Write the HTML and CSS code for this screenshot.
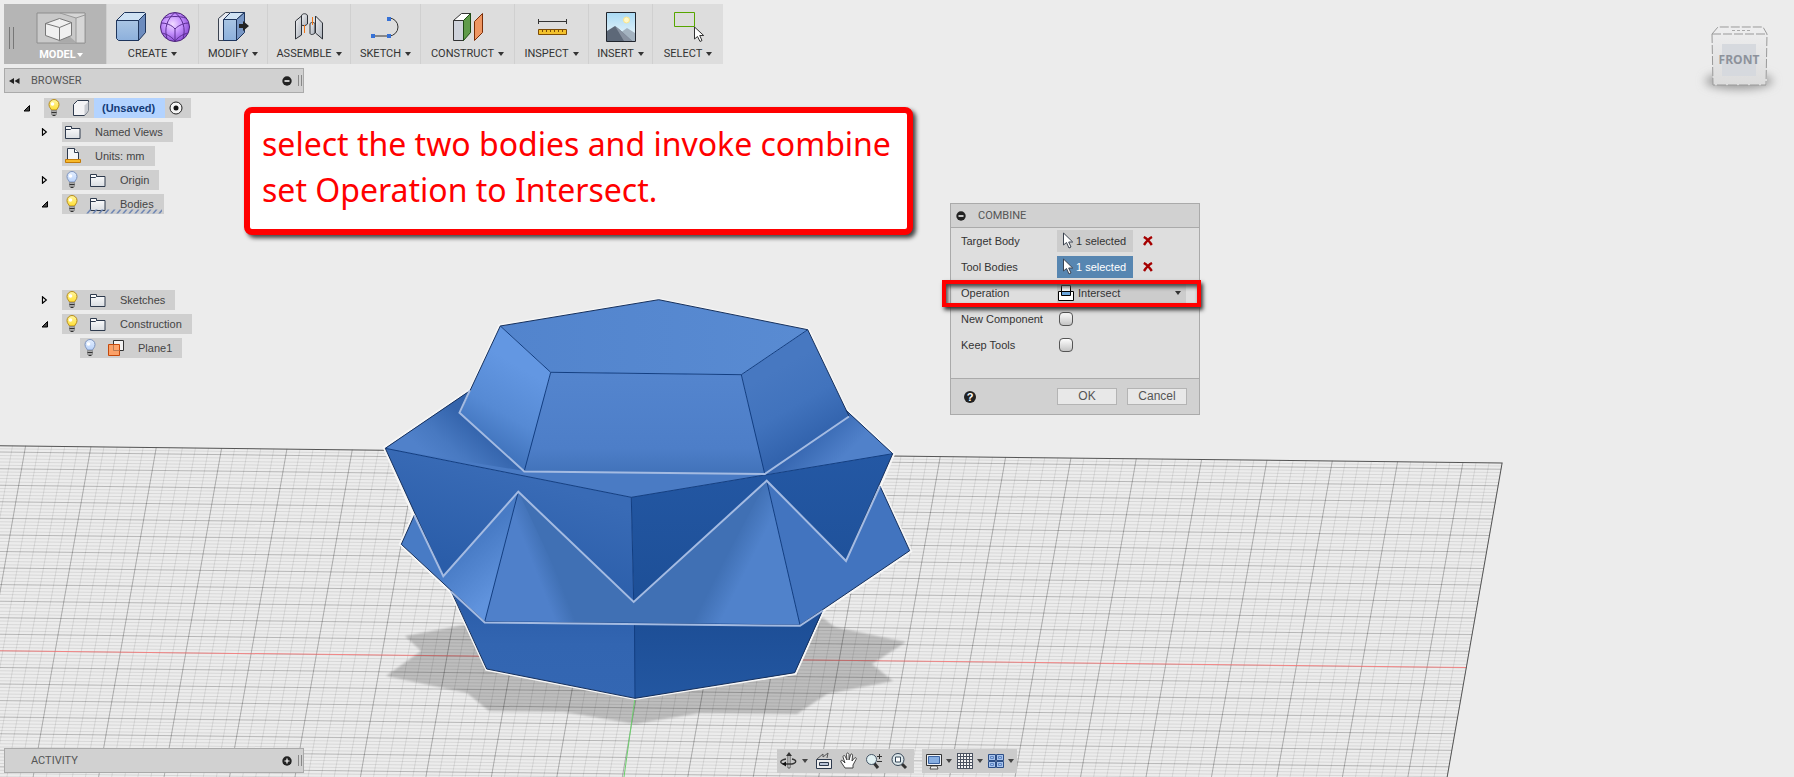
FILE: index.html
```html
<!DOCTYPE html>
<html lang="en">
<head>
<meta charset="utf-8">
<title>Combine</title>
<link rel="stylesheet" href="styles.css">
</head>
<body>
<svg class="defs" width="0" height="0" aria-hidden="true">
  <defs>
    <linearGradient id="gBulb" x1="0" y1="0" x2="0" y2="1"><stop offset="0" stop-color="#fff6a0"/><stop offset="1" stop-color="#ffdf35"/></linearGradient>
    <linearGradient id="gBulbOff" x1="0" y1="0" x2="0" y2="1"><stop offset="0" stop-color="#e4efff"/><stop offset="1" stop-color="#b9d2fa"/></linearGradient>
    <linearGradient id="gBox" x1="0" y1="0" x2="0" y2="1"><stop offset="0" stop-color="#a9c5e4"/><stop offset="1" stop-color="#8db0dc"/></linearGradient>
    <linearGradient id="gFolder" x1="0" y1="0" x2="0" y2="1"><stop offset="0" stop-color="#ffffff"/><stop offset="1" stop-color="#d9dde2"/></linearGradient>
    <linearGradient id="gMetal" x1="0" y1="0" x2="1" y2="1"><stop offset="0" stop-color="#f2f3f5"/><stop offset="1" stop-color="#a9afb8"/></linearGradient>
    <radialGradient id="gBall" cx=".42" cy=".4" r=".6"><stop offset="0" stop-color="#f1dcff"/><stop offset=".5" stop-color="#c794ff"/><stop offset="1" stop-color="#9052d8"/></radialGradient>
    <linearGradient id="gSky" x1="0" y1="0" x2="0" y2="1"><stop offset="0" stop-color="#a9daf4"/><stop offset="1" stop-color="#f2f8fa"/></linearGradient>
    <symbol id="bulb" viewBox="0 0 14 18"><path d="M4.500 11C4 9.500 2 8.500 2 5.500a5 5 0 0 1 10 0c0 3-2 4-2.500 5.500z" fill="url(#gBulb)" stroke="#b58b1c"/><circle cx="5.500" cy="5" r="1.800" fill="#fff"/><path d="M4.500 11.500h5v4h-5z" fill="#aaa" stroke="#777" stroke-width=".6"/><path d="M4.500 13.500h5M5.500 16.500h3" stroke="#333"/></symbol>
    <symbol id="bulb-off" viewBox="0 0 14 18"><path d="M4.500 11C4 9.500 2 8.500 2 5.500a5 5 0 0 1 10 0c0 3-2 4-2.500 5.500z" fill="url(#gBulbOff)" stroke="#7c93bd"/><circle cx="5.500" cy="5" r="1.800" fill="#fff"/><path d="M4.500 11.500h5v4h-5z" fill="#aaa" stroke="#777" stroke-width=".6"/><path d="M4.500 13.500h5M5.500 16.500h3" stroke="#333"/></symbol>
    <symbol id="folder" viewBox="0 0 16 16"><path d="M.5 14.500v-12h6v2h8.500v10z" fill="url(#gFolder)" stroke="#2e3a4d"/><path d="M.5 5.500h5l1-1" fill="none" stroke="#2e3a4d"/></symbol>
    <symbol id="closed" viewBox="0 0 8 8"><path d="M2.500 .8v6.400L6.300 4z" fill="#fff" stroke="#000" stroke-width="1.200"/></symbol>
    <symbol id="open" viewBox="0 0 8 8"><path d="M7.500 1.500v5.500H2z" fill="#444" stroke="#000"/></symbol>
    <symbol id="caret" viewBox="0 0 6 4"><path d="M0 0h6L3 4z" fill="currentColor"/></symbol>
    <symbol id="arrow" viewBox="0 0 12 18"><path d="M1.500 1v12l3-2.500 2.500 5.500 2-1-2.300-5h4z" fill="#fff" stroke="#3b4350"/></symbol>
    <symbol id="minus" viewBox="0 0 10 10"><circle cx="5" cy="5" r="4.700" fill="#222"/><path d="M2.500 5h5" stroke="#fff" stroke-width="1.500"/></symbol>
    <symbol id="plus" viewBox="0 0 10 10"><circle cx="5" cy="5" r="4.700" fill="#222"/><path d="M2.500 5h5M5 2.500v5" stroke="#fff" stroke-width="1.200"/></symbol>
    <symbol id="cross" viewBox="0 0 10 10"><path d="M.8 1c3 1.500 6 5 8 8M9 1C6 2.500 3 6 1 9" fill="none" stroke="#a50000" stroke-width="2.400"/></symbol>
  </defs>
</svg>

<main class="app">
  <svg class="scene" viewBox="0 0 1794 777" preserveAspectRatio="xMinYMin slice" role="img" aria-label="Model view with two intersecting bodies">
    <defs>
      <linearGradient id="fTop" x1="0" y1="0" x2="1" y2="0"><stop offset="0" stop-color="#5284cd"/><stop offset="1" stop-color="#598bd2"/></linearGradient>
      <linearGradient id="fLeft" gradientUnits="userSpaceOnUse" x1="525" y1="370" x2="480" y2="445"><stop offset="0" stop-color="#6397e2"/><stop offset=".55" stop-color="#568ad4"/><stop offset="1" stop-color="#3e71ba"/></linearGradient>
      <linearGradient id="fFront" x1="0" y1="0" x2="0" y2="1"><stop offset="0" stop-color="#5485ce"/><stop offset=".75" stop-color="#4d7ec8"/><stop offset="1" stop-color="#4172b9"/></linearGradient>
      <linearGradient id="fRight" gradientUnits="userSpaceOnUse" x1="775" y1="370" x2="815" y2="440"><stop offset="0" stop-color="#4778c1"/><stop offset=".5" stop-color="#4173bd"/><stop offset="1" stop-color="#3263ad"/></linearGradient>
      <linearGradient id="fFlangeL" gradientUnits="userSpaceOnUse" x1="445" y1="470" x2="480" y2="430"><stop offset="0" stop-color="#5081ca"/><stop offset=".4" stop-color="#4879c1"/><stop offset="1" stop-color="#3464ac"/></linearGradient>
      <linearGradient id="fFlangeR" gradientUnits="userSpaceOnUse" x1="835" y1="465" x2="805" y2="435"><stop offset="0" stop-color="#5081ca"/><stop offset="1" stop-color="#3464ae"/></linearGradient>
      <linearGradient id="fDarkL" gradientUnits="userSpaceOnUse" x1="500" y1="470" x2="470" y2="570"><stop offset="0" stop-color="#396bb6"/><stop offset="1" stop-color="#2a5da9"/></linearGradient>
      <linearGradient id="fDarkR" x1="0" y1="0" x2="0" y2="1"><stop offset="0" stop-color="#2458a4"/><stop offset="1" stop-color="#1d4f97"/></linearGradient>
      <linearGradient id="fLowL" gradientUnits="userSpaceOnUse" x1="500" y1="590" x2="465" y2="550"><stop offset="0" stop-color="#6093dd"/><stop offset="1" stop-color="#487bc5"/></linearGradient>
      <linearGradient id="fShadeA" gradientUnits="userSpaceOnUse" x1="535" y1="570" x2="553" y2="563"><stop offset="0" stop-color="#4f80ca"/><stop offset="1" stop-color="#4070b4"/></linearGradient>
      <linearGradient id="fShadeB" gradientUnits="userSpaceOnUse" x1="713" y1="582" x2="735" y2="593"><stop offset="0" stop-color="#4070b4"/><stop offset="1" stop-color="#5082cb"/></linearGradient>
      <linearGradient id="fBaseL" x1="0" y1="0" x2="0" y2="1"><stop offset="0" stop-color="#295ba7"/><stop offset=".5" stop-color="#3265b1"/><stop offset="1" stop-color="#3467b3"/></linearGradient>
      <linearGradient id="fBaseR" x1="0" y1="0" x2="0" y2="1"><stop offset="0" stop-color="#1c4d95"/><stop offset="1" stop-color="#2357a1"/></linearGradient>
      <filter id="soft" x="-5%" y="-5%" width="110%" height="110%"><feGaussianBlur stdDeviation="1"/></filter>
      <clipPath id="plane"><path d="M-1700 0H0V420H-1700z"/></clipPath>
    </defs>
    <g transform="matrix(1 .01145 -.175 1 1502.700 462.500)" clip-path="url(#plane)" fill="none">
      <path d="M-1700 0H0V420H-1700z" fill="#ececec"/>
      <path d="M-850 0V420" stroke="#000" stroke-opacity=".085" stroke-width="1700" stroke-dasharray="1 2.307" stroke-dashoffset="-6.300"/>
      <path d="M0 210H-1700" stroke="#000" stroke-opacity=".085" stroke-width="420" stroke-dasharray="1 12.067"/>
      <path d="M-850 0V420" stroke="#000" stroke-opacity=".15" stroke-width="1700" stroke-dasharray="1 15.530" stroke-dashoffset="-6.300"/>
      <path d="M0 210H-1700" stroke="#000" stroke-opacity=".19" stroke-width="420" stroke-dasharray="1 64.333" stroke-dashoffset="-39.200"/>
      <path d="M0 205H-1700" stroke="#f77" stroke-opacity=".8"/>
      <path d="M-1700 0H0V420" stroke="#555" stroke-width="2"/>
    </g>
    <path d="M464 625l-59 11 16 15-35 25 81 17 22 18 75 1 71 12 65-11 97 1 30-20 66-13-21-17 34-22-71-15-12-9z" fill="#000" fill-opacity=".2" filter="url(#soft)"/>
    <path d="M635 698L624 777" stroke="#6bcf6b" stroke-width="1"/>
    <path d="M500 326l159-26 149 30 38 80 47 44-13 32 30 65-87 59-28 63-160 25-148-29-36-78-50-47 13-29-29-67 86-58z" fill="none" stroke="#f6f6f6" stroke-width="4"/>
    <g stroke-linejoin="round">
      <path d="M451 590l34 31.700 315 3.300 23-15-28.300 62.700L635 698.300 486.700 669z" fill="url(#fBaseL)"/>
      <path d="M634 620l166 5 23-15-28.300 62.700L635 698.300z" fill="url(#fBaseR)"/>
      <path d="M401.300 544.300l13-29 29 60.400 75-84-33.600 130z" fill="url(#fLowL)"/>
      <path d="M518.300 491.700L633.700 602l133-121.300L800 625l-315.300-3.300z" fill="#4070b4"/>
      <path d="M518.300 491.700L580 622h-95.300z" fill="url(#fShadeA)"/>
      <path d="M766.700 480.700L800 625H690z" fill="url(#fShadeB)"/>
      <path d="M766.700 480.700L846 560.300 880 486l29.700 64.700L800 625z" fill="#4274bf"/>
      <path d="M385.300 448.300L471 390l374.700 20 47 43.700-261.400 43.600z" fill="#4a7bc4"/>
      <path d="M385.300 448.300L471 390l53.300 81z" fill="url(#fFlangeL)"/>
      <path d="M764.700 474.500L845.700 410l47 43.700z" fill="url(#fFlangeR)"/>
      <path d="M385.300 448.300l246 49 2.400 104.700-115.400-110.300-75 84z" fill="url(#fDarkL)"/>
      <path d="M631.300 497.300l261.400-43.600L846 560.300l-79.300-79.600-133 121.300z" fill="url(#fDarkR)"/>
      <path d="M500.300 326l50.400 46.300-26.400 98.700-64.600-58.300z" fill="url(#fLeft)"/>
      <path d="M550.700 372.300l190.600 2.400 23.400 99L524.300 471z" fill="url(#fFront)"/>
      <path d="M807.700 329.700L849 416l-84.300 57.700-23.400-99z" fill="url(#fRight)"/>
      <path d="M500.300 326L658.700 299.700l149 30-66.400 45-190.600-2.400z" fill="url(#fTop)"/>
    </g>
    <g fill="none" stroke="#123e82" stroke-width="1">
      <path d="M500.300 326l50.400 46.300 190.600 2.400 66.400-45M550.700 372.300L524.300 471M741.300 374.700l23.400 99"/>
      <path d="M385.300 448.300l246 49 261.400-43.600M631.300 497.300L633.700 602M518.300 491.700L484.700 621.700 800 625 766.700 480.700M634.500 623l.5 75.300"/>
    </g>
    <g fill="none" stroke="#16305c" stroke-width="1">
      <path d="M459.700 412.700L500.300 326 658.700 299.700l149 30L849 416M471 390l-85.700 58.300L443.300 575.700M845.700 410l47 43.700L846 560.300M414.300 515.300l-13 29 83.400 77.400M880 486l29.700 64.700L800 625M451 590.700L486.700 669 635 698.300l159.700-25.600 28-62.700"/>
    </g>
    <g fill="none" stroke="#a4bbe2" stroke-width="2">
      <path d="M470 390l-10.500 22.700 64.800 58.800 240.400 2.600L849 416.500"/>
      <path d="M414.300 515.300l29 60.900 75-84.500L633.700 602l133-121.300L846 561l34-75"/>
      <path d="M451 591.500l33.700 31 315.300 3.300 23-15.300"/>
    </g>
  </svg>

  <div class="layout">
    <nav class="ribbon" aria-label="Workspace tools">
      <button class="tool tool-model">
        <span class="grip"></span>
        <span class="tool-face">
          <svg width="50" height="32" viewBox="0 0 50 32"><path d="M1 1h48v30H1z" fill="#c9c9c9" stroke="#8d8d8d"/><path d="M24 1l16 5v25h9V1z" fill="#d6d6d6" stroke="#999"/><path d="M40 6l9-3" stroke="#999"/><path d="M33 24l7 6H22z" fill="#aaa"/><path d="M9.500 11.500l14-5 12 4v13l-12 5-14-5z" fill="#f0f0f0" stroke="#777"/><path d="M9.500 11.500l14 4 12-5M23.500 15.500v13" fill="none" stroke="#777"/></svg>
          <span class="tool-label">MODEL<svg class="caret"><use href="#caret"/></svg></span>
        </span>
      </button>
      <button class="tool tool-create">
        <span class="icons">
          <svg width="32" height="32" viewBox="0 0 32 32"><path d="M1.500 9.500h22v20h-20l-2-2z" fill="url(#gBox)" stroke="#1e355c"/><path d="M1.500 9.500l8-8h20l1 1-7 7z" fill="#cfe2f4" stroke="#1e355c"/><path d="M23.500 9.500l7-7v19l-7 8z" fill="#6d8cbe" stroke="#1e355c"/></svg>
          <svg width="32" height="32" viewBox="0 0 32 32"><circle cx="16" cy="16" r="14.500" fill="url(#gBall)" stroke="#4b2377"/><path d="M16 1.500C8 8 5 17 8 28M16 1.500C24 8 27 17 24 28M16 17v13M2 12c5 0 11 2 14 6 4-4 9-6 14-6M5 7c7-2 15-2 22 0M3 22c4 1 9 3 13 8 4-5 9-7 13-8" fill="none" stroke="#5b2e93"/></svg>
        </span>
        <span class="tool-label">CREATE<svg class="caret"><use href="#caret"/></svg></span>
      </button>
      <button class="tool tool-modify">
        <svg width="32" height="32" viewBox="0 0 32 32"><path d="M1.500 7.500l7-6h4v28h-11z" fill="#e6e8ee" stroke="#3b4350"/><path d="M6.500 8.500h13v21h-13z" fill="url(#gBox)" stroke="#1e355c"/><path d="M6.500 8.500l7-7h14l-8 7z" fill="#cfe2f4" stroke="#1e355c"/><path d="M19.500 8.500l8-7v20l-8 8z" fill="#7897c5" stroke="#1e355c"/><path d="M22 13h4v-3l6 5-6 5v-3h-4z" fill="#222"/></svg>
        <span class="tool-label">MODIFY<svg class="caret"><use href="#caret"/></svg></span>
      </button>
      <button class="tool tool-assemble">
        <svg width="32" height="32" viewBox="0 0 32 32"><path d="M2.500 10l6-5v19l-6 4z" fill="url(#gMetal)" stroke="#2d3138"/><path d="M8.500 5c0-3 6-3 6 0v8c-2 2-4 2-6 1z" fill="url(#gMetal)" stroke="#2d3138"/><path d="M17 13c0-2 5-2 5 0v9c-2 2-5 2-5 0z" fill="url(#gMetal)" stroke="#2d3138"/><path d="M22.500 5l7 7v16l-7-6z" fill="url(#gMetal)" stroke="#2d3138"/><path d="M11.500 14v8M19.500 6v8" stroke="#f37413"/></svg>
        <span class="tool-label">ASSEMBLE<svg class="caret"><use href="#caret"/></svg></span>
      </button>
      <button class="tool tool-sketch">
        <svg width="32" height="32" viewBox="0 0 32 32"><path d="M3 25h16a9 9 0 0 0 0-18" fill="none" stroke="#333"/><path d="M1 23h4v4H1zM17 23h4v4h-4zM17 6h4v4h-4z" fill="#3671d6"/></svg>
        <span class="tool-label">SKETCH<svg class="caret"><use href="#caret"/></svg></span>
      </button>
      <button class="tool tool-construct">
        <svg width="32" height="32" viewBox="0 0 32 32"><path d="M1.500 9.500l8-7h9l-7 7z" fill="#fff" stroke="#333"/><path d="M1.500 9.500h10v20h-10z" fill="#cfd3dc" stroke="#333"/><path d="M11.500 9.500l7-7v19l-7 8z" fill="#5f9b4a" stroke="#1c4a12"/><path d="M22.500 10.500l8-8v19l-8 8z" fill="#ee9662" stroke="#7a2c06"/></svg>
        <span class="tool-label">CONSTRUCT<svg class="caret"><use href="#caret"/></svg></span>
      </button>
      <button class="tool tool-inspect">
        <svg width="32" height="32" viewBox="0 0 32 32"><path d="M2.500 8v5M30.500 8v5M3 10.500h27" stroke="#333"/><path d="M2.500 18.500h28v5h-28z" fill="#f2c12c" stroke="#7d4b05"/><path d="M6.500 19v2M10.500 19v2M14.500 19v2M18.500 19v2M22.500 19v2M26.500 19v2" stroke="#7d4b05"/></svg>
        <span class="tool-label">INSPECT<svg class="caret"><use href="#caret"/></svg></span>
      </button>
      <button class="tool tool-insert">
        <svg width="32" height="32" viewBox="0 0 32 32"><path d="M1.500 1.500h29v29h-29z" fill="url(#gSky)"/><circle cx="21.500" cy="9" r="3" fill="#fff8c8" stroke="#fbe58c"/><path d="M15 22l7-5 8 5v8H15z" fill="#a4b3c0"/><path d="M2 20l8-5 5 4 12 11H2z" fill="#5d6878"/><path d="M10 15l4 3 13 12h-8z" fill="#8791a0"/><path d="M1.500 1.500h29v29h-29z" fill="none" stroke="#20242c"/></svg>
        <span class="tool-label">INSERT<svg class="caret"><use href="#caret"/></svg></span>
      </button>
      <button class="tool tool-select">
        <svg width="32" height="32" viewBox="0 0 32 32"><path d="M2.500 1.500h20v14h-20z" fill="none" stroke="#57a500"/><path d="M22.500 16v12l3-2.500 2.500 5 2-1-2.300-5h4z" fill="#fff" stroke="#333"/></svg>
        <span class="tool-label">SELECT<svg class="caret"><use href="#caret"/></svg></span>
      </button>
    </nav>

    <section class="browser" aria-label="Browser">
      <header class="bar">
        <svg class="rewind" width="11" height="6" viewBox="0 0 11 6"><path d="M5 0v6L0 3zM10.500 0v6L5.500 3z" fill="#222"/></svg>
        <span class="bar-title">BROWSER</span>
        <button class="bar-btn" aria-label="Collapse"><svg width="10" height="10"><use href="#minus"/></svg></button>
        <span class="bar-grip"></span>
      </header>
      <ul class="tree">
        <li class="node root"><svg class="twist"><use href="#open"/></svg><span class="chip"><svg class="bulb"><use href="#bulb"/></svg>
          <svg class="cube" width="18" height="18" viewBox="0 0 18 18"><path d="M1.500 5.500l4-4h11v10l-4 5h-11z" fill="#f3f3f5" stroke="#2e3a4d"/><path d="M12.500 6.500l4-4v9l-4 5z" fill="#c9ccd2"/></svg><strong class="doc">(Unsaved)</strong>
          <svg class="radio" width="14" height="14" viewBox="0 0 14 14"><circle cx="7" cy="7" r="6" fill="#f4f4f4" stroke="#222"/><circle cx="7" cy="7" r="2.500" fill="#111"/></svg></span></li>
        <li class="node"><svg class="twist"><use href="#closed"/></svg><span class="chip"><svg class="folder"><use href="#folder"/></svg><span class="name">Named Views</span></span></li>
        <li class="node"><span class="twist"></span><span class="chip"><svg class="folder" viewBox="0 0 16 16"><path d="M2.500 11V.5h7l4 4V11" fill="#f5f6f8" stroke="#2e3a4d"/><path d="M9.500.5v4h4" fill="#fff" stroke="#2e3a4d"/><path d="M.5 11.500h15v3H.5z" fill="#f7b92a" stroke="#c27a08"/></svg><span class="name">Units: mm</span></span></li>
        <li class="node"><svg class="twist"><use href="#closed"/></svg><span class="chip"><svg class="bulb"><use href="#bulb-off"/></svg><svg class="folder"><use href="#folder"/></svg><span class="name">Origin</span></span></li>
        <li class="node node-bodies"><svg class="twist"><use href="#open"/></svg><span class="chip"><svg class="bulb"><use href="#bulb"/></svg><svg class="folder"><use href="#folder"/></svg><span class="name">Bodies</span>
          <svg class="hatch" viewBox="0 0 76 5"><path d="M0 2.500H76" stroke="#6f87b5" stroke-width="4" stroke-dasharray="2 4" transform="skewX(-40) translate(4 0)"/></svg></span></li>
        <li class="node"><svg class="twist"><use href="#closed"/></svg><span class="chip"><svg class="bulb"><use href="#bulb"/></svg><svg class="folder"><use href="#folder"/></svg><span class="name">Sketches</span></span></li>
        <li class="node"><svg class="twist"><use href="#open"/></svg><span class="chip"><svg class="bulb"><use href="#bulb"/></svg><svg class="folder"><use href="#folder"/></svg><span class="name">Construction</span></span></li>
        <li class="node leaf"><span class="twist"></span><span class="chip"><svg class="bulb"><use href="#bulb-off"/></svg><svg class="folder" viewBox="0 0 16 16"><path d="M5.500.5h10v10h-10z" fill="#f2f2f2" stroke="#333"/><path d="M.5 4.500h11v11H.5z" fill="#ff9b5c" fill-opacity=".9" stroke="#c4480a"/><path d="M5.500 5v5.500h6" fill="none" stroke="#b97a52"/></svg><span class="name">Plane1</span></span></li>
      </ul>
    </section>

    <footer class="footer">
      <section class="bar activity" aria-label="Activity">
        <span class="bar-title">ACTIVITY</span>
        <button class="bar-btn" aria-label="Expand"><svg width="10" height="10"><use href="#plus"/></svg></button>
        <span class="bar-grip"></span>
      </section>
      <div class="navs">
        <div class="nav">
          <button class="nav-btn wide" aria-label="Orbit"><svg width="18" height="18" viewBox="0 0 18 18"><path d="M8 3h2v13H8z" fill="#fff" stroke="#333" stroke-width=".8"/><path d="M9 0l3 4H6z" fill="#333"/><path d="M6 7C0 8-1 11 4 12l8 0c5-1 5-4 0-5" fill="none" stroke="#333" stroke-width="1.300"/><path d="M2 12l4-2.500v5z" fill="#111"/></svg><svg class="caret"><use href="#caret"/></svg></button>
          <button class="nav-btn" aria-label="Look at"><svg width="18" height="18" viewBox="0 0 18 18"><path d="M1.500 7.500h15v9h-15z" fill="#eee" stroke="#2e3a4d"/><path d="M4.500 10.500h9v3h-9z" fill="#bcc6d8" stroke="#2e3a4d"/><path d="M2 7l6-5v3l5-4-1 5" fill="none" stroke="#555"/></svg></button>
          <button class="nav-btn" aria-label="Pan"><svg width="18" height="18" viewBox="0 0 18 18"><path d="M5 16L1 10c-1-2 1-2 2-1l2 2-2-6c0-2 2-2 2.500 0L7 8 6.500 2.500c0-2 2-2 2.500 0V8l1.500-5c.5-2 2.500-1 2 1L12 9l2.500-3c1-1 2.500 0 1.500 1.500L13 13v3z" fill="#fff" stroke="#333" stroke-width=".9"/></svg></button>
          <button class="nav-btn" aria-label="Zoom"><svg width="18" height="18" viewBox="0 0 18 18"><path d="M9 11l4 5" stroke="#333" stroke-width="3"/><circle cx="6.500" cy="7.500" r="5" fill="#e1f0f2" stroke="#456"/><path d="M12 4.500h5M14.500 2v5M12 9.500h5" stroke="#333"/></svg></button>
          <button class="nav-btn" aria-label="Fit"><svg width="18" height="18" viewBox="0 0 18 18"><path d="M12 12l4 4" stroke="#333" stroke-width="3"/><circle cx="8" cy="7.500" r="6" fill="#dfe9ec" stroke="#345"/><path d="M5.500 5h5v5h-5z" fill="#fff" stroke="#345"/></svg></button>
        </div>
        <div class="nav">
          <button class="nav-btn wide" aria-label="Display settings"><svg width="18" height="18" viewBox="0 0 18 18"><path d="M6 14h6l1 3H5z" fill="#eee" stroke="#333" stroke-width=".8"/><path d="M1.500 2.500h15v11h-15z" fill="#eef2f7" stroke="#333"/><path d="M3.500 4.500h11v7h-11z" fill="#86aee2" stroke="#3a62a0"/></svg><svg class="caret"><use href="#caret"/></svg></button>
          <button class="nav-btn wide" aria-label="Grid settings"><svg width="18" height="18" viewBox="0 0 18 18"><path d="M1.500 1.500h15v15h-15z" fill="#f3f3f3"/><path d="M1.500 1v16M4.500 1v16M7.500 1v16M10.500 1v16M13.500 1v16M16.500 1v16M1 1.500h16M1 4.500h16M1 7.500h16M1 10.500h16M1 13.500h16M1 16.500h16" stroke="#4a5260"/></svg><svg class="caret"><use href="#caret"/></svg></button>
          <button class="nav-btn wide" aria-label="Viewports"><svg width="18" height="18" viewBox="0 0 18 18"><path d="M1.500 2.500h7v6h-7zM9.500 2.500h7v6h-7zM1.500 9.500h7v6h-7zM9.500 9.500h7v6h-7z" fill="#a9c4ec" stroke="#2c4e86"/><path d="M3.500 4.500h3v2h-3zM11.500 4.500h3v2h-3zM3.500 11.500h3v2h-3zM11.500 11.500h3v2h-3z" fill="none" stroke="#5f86c4"/></svg><svg class="caret"><use href="#caret"/></svg></button>
        </div>
      </div>
    </footer>
  </div>

  <button class="viewcube" aria-label="Front view">
    <svg class="viewcube-box" viewBox="0 0 90 80"><defs><filter id="cubeBlur" x="-30%" y="-80%" width="160%" height="260%"><feGaussianBlur stdDeviation="5"/></filter><linearGradient id="gCube" x1="0" y1="0" x2="0" y2="1"><stop offset="0" stop-color="#eeeeef"/><stop offset="1" stop-color="#dcdcdc"/></linearGradient></defs><ellipse cx="45" cy="61" rx="34" ry="8" fill="#999" filter="url(#cubeBlur)"/><path d="M18 14l6-7h45l4 7 0 51H19z" fill="url(#gCube)"/><path d="M28 24h34v32H28z" fill="#d6d9de"/><path d="M18 14h55M18 14l6-7h45l4 7M18 14l1 51h53l1-51" fill="none" stroke="#999" stroke-dasharray="9 2"/><path d="M38 10.500h18" stroke="#aaa" stroke-dasharray="3 2"/></svg>
    <span class="viewcube-label">FRONT</span>
  </button>

  <p class="callout">select the two bodies and invoke combine<br>set Operation to Intersect.</p>

  <form class="dialog" aria-label="Combine">
    <header class="dialog-head"><svg width="10" height="10"><use href="#minus"/></svg><span class="bar-title">COMBINE</span></header>
    <div class="dialog-body">
      <div class="row"><span class="row-label">Target Body</span><button type="button" class="pick"><svg width="12" height="18"><use href="#arrow"/></svg>1 selected</button><button type="button" class="clear" aria-label="Clear target"><svg width="10" height="10"><use href="#cross"/></svg></button></div>
      <div class="row"><span class="row-label">Tool Bodies</span><button type="button" class="pick active"><svg width="12" height="18"><use href="#arrow"/></svg>1 selected</button><button type="button" class="clear" aria-label="Clear tools"><svg width="10" height="10"><use href="#cross"/></svg></button></div>
      <div class="row"><label class="row-label" for="op">Operation</label><span class="combo"><svg class="combo-icon" width="16" height="16" viewBox="0 0 16 16"><path d="M3.500.5h9v8h-9z" fill="#fff" stroke="#000"/><path d="M.5 6.500h15v9H.5z" fill="#fff" stroke="#000"/><path d="M3.500 6.500h9v4h-9z" fill="#6aa5dc" stroke="#000"/></svg><select id="op"><option>Intersect</option><option>Join</option><option>Cut</option></select><svg class="caret"><use href="#caret"/></svg></span></div>
      <div class="row"><label class="row-label" for="nc">New Component</label><input type="checkbox" id="nc"></div>
      <div class="row"><label class="row-label" for="kt">Keep Tools</label><input type="checkbox" id="kt"></div>
      <div class="highlight"></div>
    </div>
    <footer class="dialog-foot"><span class="help">?</span><button type="button" class="btn">OK</button><button type="button" class="btn">Cancel</button></footer>
  </form>
</main>
</body>
</html>
```

FILE: styles.css
```css
* { box-sizing: border-box; }
body { margin: 0; background: #ececec; color: #444; font: 11px/16px "Liberation Sans", Arial, sans-serif; }
button, select, input { font: inherit; color: inherit; margin: 0; }
button { border: 0; padding: 0; background: none; }
svg { display: block; flex: none; }
.defs { position: absolute; }
.app { position: relative; min-height: 100vh; overflow: hidden; }
.scene { position: absolute; inset: 0; width: 100%; height: 100%; }
.layout { position: relative; display: flex; flex-direction: column; min-height: 100vh; padding: 4px; }

.ribbon { display: flex; align-self: flex-start; height: 60px; background: #ddd; }
.tool { display: flex; flex-direction: column; align-items: center; padding: 7px 0 0; gap: 3px; border-right: 1px solid #d0d0d0; font: 11px/16px Roboto, sans-serif; color: #333; }
.tool:last-child { border-right: 0; }
.icons { display: flex; gap: 12px; }
.tool-label { display: flex; align-items: center; gap: 4px; }
.caret { width: 6px; height: 4px; }
.tool-model { flex-direction: row; width: 103px; background: #b5b5b5; color: #fff; font-weight: bold; padding-left: 5px; gap: 22px; }
.tool-model .tool-label { gap: 1px; }
.tool-face { display: flex; flex-direction: column; align-items: center; gap: 3px; }
.grip { width: 5px; height: 22px; border: solid #777; border-width: 0 1px; }
.tool-create { width: 92px; }
.tool-modify { width: 69px; }
.tool-assemble { width: 83px; }
.tool-sketch { width: 70px; }
.tool-construct { width: 94px; }
.tool-inspect { width: 74px; }
.tool-insert { width: 64px; }
.tool-select { width: 70px; }

.browser { flex: 1; width: 300px; margin-top: 4px; }
.bar { display: flex; align-items: center; width: 300px; height: 25px; padding: 0 1px 0 26px; border: 1px solid #aaa; background: #d1d1d1; color: #666; }
.browser .bar { padding-left: 4px; }
.rewind { margin-right: 11px; }
.bar-title { flex: 1; font: 11px/16px Roboto, sans-serif; color: #555; }
.bar-grip { width: 4px; height: 11px; margin-left: 6px; border: solid #888; border-width: 0 1px; }

.tree { list-style: none; margin: 5px 0 0; padding: 0; }
.node { display: flex; align-items: center; height: 20px; margin-bottom: 4px; padding-left: 36px; }
.root { padding-left: 18px; }
.leaf { padding-left: 54px; }
.node-bodies { margin-bottom: 76px; }
.twist { width: 8px; height: 8px; margin-right: 14px; }
.chip { position: relative; display: flex; align-items: center; height: 20px; padding: 0 10px 0 3px; background: #cfcfcf; color: #444; }
.bulb { width: 14px; height: 18px; margin-right: 11px; }
.folder { width: 16px; height: 16px; }
.name { margin-left: 14px; }
.root .chip { padding-right: 8px; }
.cube { margin: 0 4px 0 0; }
.doc { padding: 0 10px 0 8px; margin-right: 4px; line-height: 20px; background: #b3d3ff; color: #123a76; }
.hatch { position: absolute; left: 24px; bottom: 0; width: 76px; height: 5px; }

.footer { display: grid; grid-template-columns: 1fr auto 1fr; align-items: end; }
.navs { display: flex; gap: 8px; }
.nav { display: flex; align-items: center; gap: 8px; height: 24px; padding: 0 6px 0 3px; background: #cbcbcb; }
.nav:first-child { gap: 7px; }
.nav:last-child { gap: 4px; }
.nav:last-child { padding-right: 3px; }
.nav-btn { display: flex; align-items: center; gap: 4px; }
.nav:last-child .nav-btn { gap: 3px; }

.viewcube { position: absolute; top: 20px; right: 10px; width: 90px; height: 80px; display: grid; place-items: center; }
.viewcube-box { grid-area: 1 / 1; width: 90px; height: 80px; }
.viewcube-label { grid-area: 1 / 1; position: relative; font: bold 12px/16px "Open Sans", sans-serif; color: #8d929b; }

.callout { position: absolute; left: 244px; top: 107px; margin: 0; padding: 8px 16px 16px 12px; border: 6px solid #f00; border-radius: 8px; background: #fff; box-shadow: 3px 3px 4px #444; color: #f00; font: 32px/46px "Noto Sans", "Open Sans", sans-serif; }

.dialog { position: absolute; left: 950px; top: 203px; width: 250px; border: 1px solid #aaa; background: #dedede; color: #333; }
.dialog-head { display: flex; align-items: center; gap: 12px; height: 24px; padding: 0 5px; border-bottom: 1px solid #aaa; background: #d1d1d1; }
.dialog-body { position: relative; padding: 0 10px 20px; }
.row { display: flex; align-items: center; height: 26px; }
.row-label { width: 96px; }
.pick { display: flex; align-items: center; gap: 2px; width: 76px; height: 22px; padding-left: 5px; background: #ccc; }
.pick.active { background: #5786b1; color: #fff; }
.clear { margin-left: 10px; }
.combo { display: flex; align-items: center; width: 129px; height: 22px; padding: 0 5px 0 1px; background: #ccc; }
.combo select { flex: 1; appearance: none; border: 0; padding: 0 0 0 4px; background: none; }
input[type="checkbox"] { appearance: none; width: 14px; height: 14px; margin-left: 2px; border: 1px solid #555; border-radius: 4px; background: linear-gradient(#fdfdfd, #c4c4c4); }
.highlight { position: absolute; left: -9px; right: -2px; top: 52px; height: 27px; border: 4px solid #f00; box-shadow: 2px 3px 4px #333, inset 2px 3px 4px #444; pointer-events: none; }
.dialog-foot { display: flex; align-items: center; gap: 10px; height: 36px; padding: 0 12px 0 13px; border-top: 1px solid #aaa; background: #d1d1d1; }
.help { width: 12px; height: 12px; margin-right: auto; border-radius: 50%; background: #222; color: #fff; font-weight: bold; line-height: 12px; text-align: center; }
.btn { width: 60px; height: 17px; border: 1px solid #b4b4b4; background: #e8e8e8; font-size: 12px; line-height: 15px; color: #555; }
```
